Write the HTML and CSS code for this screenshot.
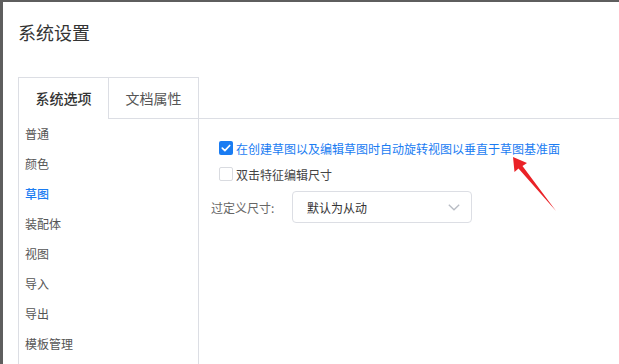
FILE: index.html
```html
<!DOCTYPE html>
<html lang="zh-CN">
<head>
<meta charset="utf-8">
<title>系统设置</title>
<link rel="stylesheet" href="styles.css">
</head>
<body>
<div class="dialog">
  <div class="title">系统设置</div>
  <div class="panel">
    <div class="left">
      <div class="tabs">
        <div class="tab active">系统选项</div>
        <div class="tab">文档属性</div>
      </div>
      <ul class="menu">
        <li>普通</li>
        <li>颜色</li>
        <li class="current">草图</li>
        <li>装配体</li>
        <li>视图</li>
        <li>导入</li>
        <li>导出</li>
        <li>模板管理</li>
      </ul>
    </div>
    <div class="right">
      <div class="right-head"></div>
      <div class="content">
        <label class="check-row checked">
          <span class="box"><svg width="14" height="14" viewBox="0 0 14 14"><path d="M3.3 7.2 L5.9 9.7 L10.7 4.5" fill="none" stroke="#fff" stroke-width="1.7" stroke-linecap="round" stroke-linejoin="round"/></svg></span>
          <span class="text">在创建草图以及编辑草图时自动旋转视图以垂直于草图基准面</span>
        </label>
        <label class="check-row">
          <span class="box"></span>
          <span class="text">双击特征编辑尺寸</span>
        </label>
        <div class="form-row">
          <span class="form-label">过定义尺寸:</span>
          <div class="select">
            <span class="select-value">默认为从动</span>
            <svg class="chev" width="12" height="7" viewBox="0 0 12 7"><polyline points="0.8,0.8 6,5.8 11.2,0.8" fill="none" stroke="#b8bcc4" stroke-width="1.3"/></svg>
          </div>
        </div>
      </div>
    </div>
  </div>
</div>
<svg class="arrow" width="60" height="65" viewBox="500 150 60 65"><polygon points="513,157 527,163 522.5,166 556,211 518.5,168.5 514.5,172" fill="#ea2227"/></svg>
</body>
</html>
```
FILE: styles.css
```css
html, body {
  margin: 0;
  padding: 0;
}
body {
  background: #5e5e5e;
  width: 619px;
  height: 364px;
  overflow: hidden;
  position: relative;
  font-family: "Noto Sans CJK SC", "Noto Sans", sans-serif;
}
.dialog {
  margin: 2px 0 0 3px;
  height: 362px;
  background: #fff;
  padding: 0 0 0 15px;
  box-sizing: border-box;
  display: flex;
  flex-direction: column;
  overflow: hidden;
}
.title {
  margin-top: 18px;
  font-size: 18px;
  line-height: 24px;
  color: #333;
  height: 24px;
}
.panel {
  margin-top: 33px;
  display: flex;
  flex: 1;
  min-height: 0;
}
.left {
  width: 181px;
  box-sizing: border-box;
  border: 1px solid #dcdee4;
  border-bottom: none;
  display: flex;
  flex-direction: column;
}
.tabs {
  display: flex;
  height: 41px;
}
.tab {
  box-sizing: border-box;
  height: 41px;
  line-height: 40px;
  text-align: center;
  font-size: 14px;
  color: #555;
  border-bottom: 1px solid #dcdee4;
}
.tab:first-child {
  width: 90px;
  border-right: 1px solid #dcdee4;
}
.tab:last-child {
  flex: 1;
}
.tab.active {
  border-bottom: none;
  color: #333;
  font-weight: 500;
}
.menu {
  list-style: none;
  margin: 0;
  padding: 0 0 0 6px;
}
.menu li {
  height: 30px;
  line-height: 30px;
  font-size: 12px;
  color: #555;
}
.menu li.current {
  color: #1a7cf2;
  font-weight: 500;
}
.right {
  flex: 1;
  display: flex;
  flex-direction: column;
}
.right-head {
  height: 42px;
  box-sizing: border-box;
  border-bottom: 1px solid #dcdee4;
}
.content {
  padding: 20px 0 0 12px;
  display: flex;
  flex-direction: column;
  gap: 8px;
}
.check-row {
  display: flex;
  align-items: center;
  height: 18px;
  gap: 3px;
  padding-left: 8px;
  font-size: 12px;
  color: #444;
}
.box {
  width: 14px;
  height: 14px;
  box-sizing: border-box;
  border: 1px solid #d9dbe0;
  border-radius: 2px;
  background: #fff;
  display: flex;
}
.checked .box {
  border: none;
  background: #1a7cf2;
}
.checked .text {
  color: #1a7cf2;
}
.form-row {
  display: flex;
  align-items: center;
  gap: 16px;
}
.form-label {
  font-size: 12px;
  color: #666;
  width: 65px;
}
.select {
  width: 180px;
  height: 32px;
  box-sizing: border-box;
  border: 1px solid #dcdee4;
  border-radius: 4px;
  display: flex;
  align-items: center;
  justify-content: space-between;
  padding: 0 11px 0 14px;
}
.select-value {
  font-size: 12px;
  color: #333;
}
.chev {
  display: block;
}
.arrow {
  position: absolute;
  left: 500px;
  top: 150px;
}
```
